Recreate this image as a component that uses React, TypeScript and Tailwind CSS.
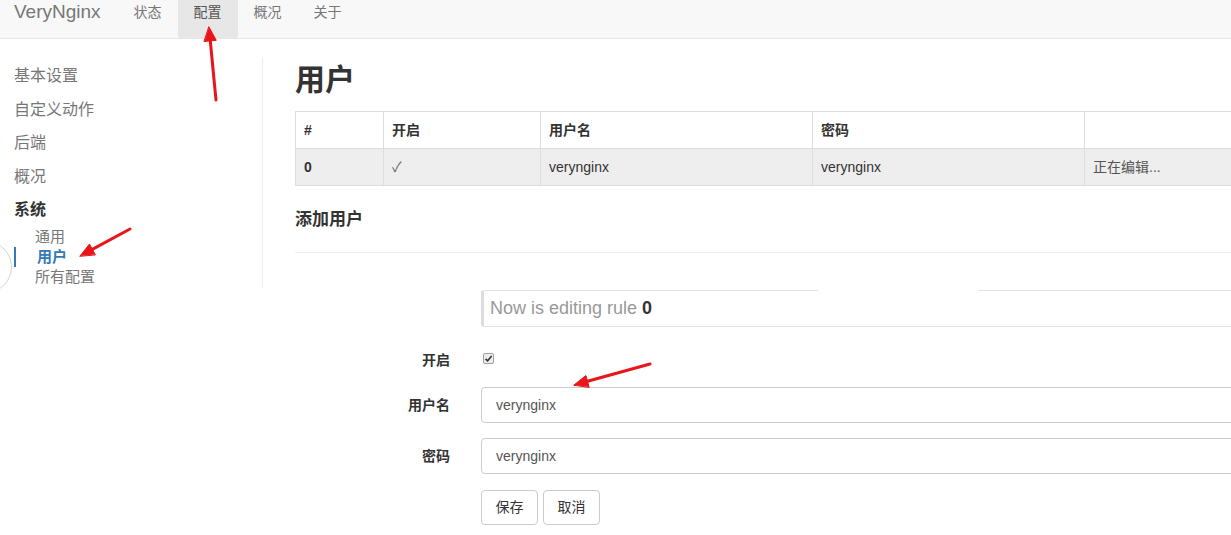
import React from "react";

const font = "font-['Liberation_Sans','Noto_Sans_CJK_SC',sans-serif]";

export default function App() {
  const navItems = [
    { name: "状态", active: false },
    { name: "配置", active: true },
    { name: "概况", active: false },
    { name: "关于", active: false },
  ];

  const sideItems = ["基本设置", "自定义动作", "后端", "概况"];

  return (
    <div className={`relative w-[1231px] h-[535px] overflow-hidden bg-white ${font}`}>
      {/* NAVBAR */}
      <nav className="h-[39px] bg-[#f8f8f8] border-b border-[#e7e7e7] flex">
        <div className="pl-[14px] pr-[17px] pt-[1px] text-[19px] leading-[22px] text-[#777]">VeryNginx</div>
        {navItems.map((item) => (
          <div
            key={item.name}
            className={`h-[38px] px-[16px] pt-[2px] text-[14px] leading-[20px] ${
              item.active ? "bg-[#e7e7e7] text-[#555]" : "text-[#777]"
            }`}
          >
            {item.name}
          </div>
        ))}
      </nav>

      <div className="flex">
        {/* SIDEBAR */}
        <div className="relative w-[263px] shrink-0 mt-[18px] h-[231px] border-r border-[#eee] pl-[14px] pt-[2px]">
          {sideItems.map((s) => (
            <div key={s} className="py-[7px] text-[16px] leading-[19.5px] text-[#777]">
              {s}
            </div>
          ))}
          <div className="py-[7px] text-[16px] leading-[19.5px] text-[#333] font-bold">系统</div>
          <div className="text-[15px] leading-[20px]">
            <div className="pl-[21px] text-[#777]">通用</div>
            <div className="pl-[21px] border-l-2 border-[#337ab7] text-[#337ab7] font-bold">用户</div>
            <div className="pl-[21px] text-[#777]">所有配置</div>
          </div>
        </div>

        {/* MAIN */}
        <div className="pl-[32px] w-[1000px] shrink-0">
          <h1 className="mt-[24px] text-[30px] leading-[34px] font-bold text-[#333]">用户</h1>

          <table className="mt-[14px] w-full border-collapse text-[14px] text-[#333]">
            <thead>
              <tr>
                <th className="w-[88px] border border-[#ddd] px-[8px] py-[8px] leading-[20px] text-left font-bold">#</th>
                <th className="w-[157px] border border-[#ddd] px-[8px] py-[8px] leading-[20px] text-left font-bold">开启</th>
                <th className="w-[272px] border border-[#ddd] px-[8px] py-[8px] leading-[20px] text-left font-bold">用户名</th>
                <th className="w-[272px] border border-[#ddd] px-[8px] py-[8px] leading-[20px] text-left font-bold">密码</th>
                <th className="border border-[#ddd] px-[8px] py-[8px] leading-[20px] text-left"></th>
              </tr>
            </thead>
            <tbody>
              <tr className="bg-[#eeeeee]">
                <td className="border border-[#ddd] px-[8px] py-[8px] leading-[20px] font-bold">0</td>
                <td className="border border-[#ddd] px-[8px] py-[8px] leading-[20px] text-[#666]">✓</td>
                <td className="border border-[#ddd] px-[8px] py-[8px] leading-[20px]">verynginx</td>
                <td className="border border-[#ddd] px-[8px] py-[8px] leading-[20px]">verynginx</td>
                <td className="border border-[#ddd] px-[8px] py-[8px] leading-[20px] text-[#555]">正在编辑...</td>
              </tr>
            </tbody>
          </table>

          <h4 className="mt-[23px] text-[17px] leading-[22px] font-bold text-[#333]">添加用户</h4>
          <div className="mt-[21px] border-t border-[#eee]" />

          {/* FORM */}
          <div className="mt-[37px] grid grid-cols-[155px_1fr] gap-x-[31px] text-[14px]">
            <div />
            <div className="relative h-[37px] border border-[#e3e3e3] border-l-[3px] border-l-[#ddd] rounded-[3px] pl-[6px] flex items-center text-[18px] text-[#999]">
              <span>
                Now is editing rule <b className="text-[#333]">0</b>
              </span>
              <div className="absolute left-[334px] top-[-2px] w-[160px] h-[3px] bg-white rounded-full" />
            </div>

            <label className="mt-[23px] text-right font-bold text-[#333] leading-[20px]">开启</label>
            <div className="mt-[23px] h-[20px] flex items-start pt-[3px]">
              <div className="ml-[2px] w-[11px] h-[11px] rounded-[2px] border border-[#a0a0a0] bg-[#ececec] flex items-center justify-center">
                <svg width="9" height="9" viewBox="0 0 9 9">
                  <path d="M1.5 4.8 L3.6 6.8 L7.6 2" stroke="#333" strokeWidth="1.6" fill="none" />
                </svg>
              </div>
            </div>

            <label className="mt-[17px] h-[36px] flex items-center justify-end font-bold text-[#333]">用户名</label>
            <div className="mt-[17px] h-[36px] border border-[#ccc] rounded-[4px] px-[14px] flex items-center text-[#555]">
              verynginx
            </div>

            <label className="mt-[15px] h-[36px] flex items-center justify-end font-bold text-[#333]">密码</label>
            <div className="mt-[15px] h-[36px] border border-[#ccc] rounded-[4px] px-[14px] flex items-center text-[#555]">
              verynginx
            </div>

            <div />
            <div className="mt-[16px] flex gap-[5px]">
              <button className="h-[35px] w-[57px] border border-[#ccc] rounded-[4px] text-[#333] bg-white">保存</button>
              <button className="h-[35px] w-[57px] border border-[#ccc] rounded-[4px] text-[#333] bg-white">取消</button>
            </div>
          </div>
        </div>
      </div>

      {/* left edge circle (partially off-screen) */}
      <div className="absolute left-[-40px] top-[241px] w-[52px] h-[52px] rounded-full border border-[#d5d5d5]" />

      {/* red annotation arrows */}
      <svg className="absolute inset-0 pointer-events-none" width="1231" height="535">
        <g stroke="#e8161b" strokeWidth="3" strokeLinecap="round" fill="#e8161b">
          <line x1="216" y1="100" x2="210.3" y2="41" />
          <polygon points="209,27 216.3,40.3 204.3,41.5" strokeWidth="1" />
          <line x1="130" y1="229" x2="92.3" y2="249.4" />
          <polygon points="80,256 89.5,244 95.2,254.6" strokeWidth="1" />
          <line x1="650" y1="364" x2="587.5" y2="381.3" />
          <polygon points="574,385 585.9,375.5 589.1,387.1" strokeWidth="1" />
        </g>
      </svg>
    </div>
  );
}
